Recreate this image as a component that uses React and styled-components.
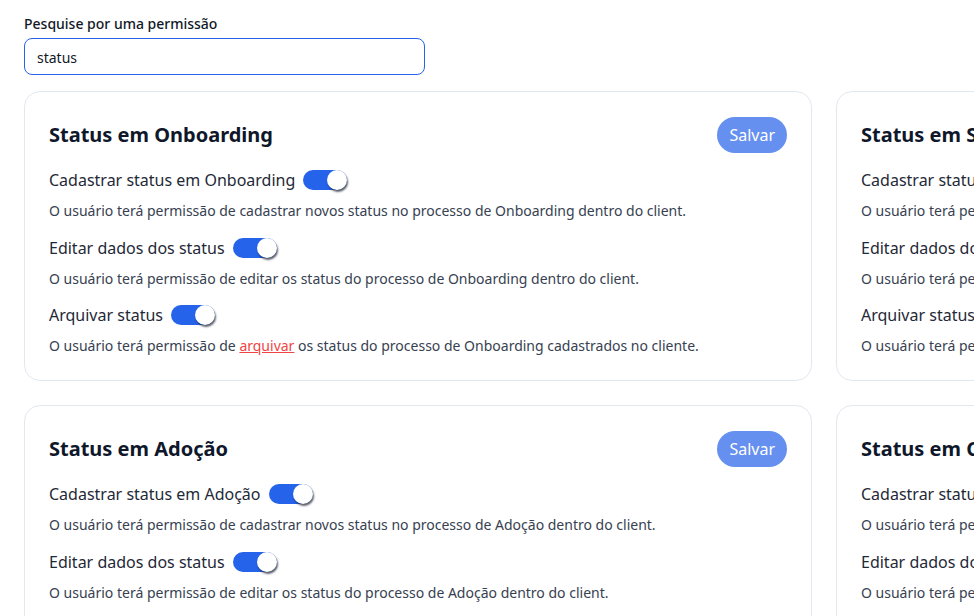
import React, { useState } from 'react';
import styled, { createGlobalStyle } from 'styled-components';

const GlobalStyle = createGlobalStyle`
  html, body {
    margin: 0;
    padding: 0;
    background: #ffffff;
    overflow: hidden;
  }
  body {
    font-family: "Noto Sans", "Open Sans", sans-serif;
    color: #111827;
  }
`

const Page = styled.div`
  padding: 14px 24px 24px;
`

const SearchLabel = styled.label`
  display: block;
  font-size: 14px;
  line-height: 20px;
  font-weight: 500;
  color: #111827;
  margin-bottom: 4px;
`

const SearchInput = styled.input`
  box-sizing: border-box;
  width: 401px;
  height: 37px;
  padding: 1px 12px 0;
  border: 1px solid #2563eb;
  border-radius: 8px;
  font-family: inherit;
  font-size: 14px;
  color: #111827;
  outline: none;
`

const Grid = styled.div`
  display: grid;
  grid-template-columns: repeat(2, 788px);
  gap: 24px;
  margin-top: 16px;
`

const Card = styled.section`
  box-sizing: border-box;
  border: 1px solid #e2e8f0;
  border-radius: 16px;
  padding: 25px 24px 24px;
  display: flex;
  flex-direction: column;
  gap: 14.5px;
`

const CardHeader = styled.div`
  display: flex;
  align-items: center;
  justify-content: space-between;
  height: 36px;
  margin-bottom: 0.5px;
`

const CardTitle = styled.h2`
  margin: 0;
  font-size: 20px;
  line-height: 28px;
  font-weight: 700;
  color: #0f172a;
  white-space: nowrap;
`

const SaveButton = styled.button`
  height: 36px;
  padding: 0 12px;
  border: none;
  border-radius: 999px;
  background: #6590ef;
  color: #ffffff;
  font-family: inherit;
  font-size: 16px;
  cursor: pointer;
`

const Permission = styled.div`
  display: flex;
  flex-direction: column;
  gap: 9px;
`

const PermissionRow = styled.div`
  display: flex;
  align-items: center;
  gap: 8px;
  height: 24px;
`

const PermissionName = styled.span`
  font-size: 16px;
  line-height: 24px;
  color: #1f2937;
  white-space: nowrap;
`

const Description = styled.p`
  margin: 0;
  font-size: 14px;
  line-height: 20px;
  color: #374151;
  white-space: nowrap;
`

const Highlight = styled.span`
  color: #ef4444;
  text-decoration: underline;
`

const Track = styled.button`
  position: relative;
  flex: none;
  width: 44px;
  height: 20px;
  padding: 0;
  border: none;
  border-radius: 999px;
  background: ${props => (props.$on ? '#2563eb' : '#cbd5e1')};
  cursor: pointer;
`

const Knob = styled.span`
  position: absolute;
  top: 0;
  left: ${props => (props.$on ? '24px' : '0')};
  width: 20px;
  height: 20px;
  border-radius: 50%;
  background: #ffffff;
  box-shadow: 1px 2px 2px rgba(15, 23, 42, 0.7);
`

function Toggle({ initial }) {
  const [on, setOn] = useState(initial)
  return (
    <Track $on={on} onClick={() => setOn(!on)} aria-pressed={on}>
      <Knob $on={on} />
    </Track>
  )
}

const makeItems = stage => [
  {
    name: `Cadastrar status em ${stage}`,
    desc: <>O usuário terá permissão de cadastrar novos status no processo de {stage} dentro do client.</>,
  },
  {
    name: 'Editar dados dos status',
    desc: <>O usuário terá permissão de editar os status do processo de {stage} dentro do client.</>,
  },
  {
    name: 'Arquivar status',
    desc: (
      <>
        O usuário terá permissão de <Highlight>arquivar</Highlight> os status do processo de {stage} cadastrados no cliente.
      </>
    ),
  },
]

const stages = ['Onboarding', 'Seleção', 'Adoção', 'Contratação']

function PermissionCard({ stage }) {
  const items = makeItems(stage)
  return (
    <Card>
      <CardHeader>
        <CardTitle>Status em {stage}</CardTitle>
        <SaveButton>Salvar</SaveButton>
      </CardHeader>
      {items.map(item => (
        <Permission key={item.name}>
          <PermissionRow>
            <PermissionName>{item.name}</PermissionName>
            <Toggle initial />
          </PermissionRow>
          <Description>{item.desc}</Description>
        </Permission>
      ))}
    </Card>
  )
}

export default function App() {
  const [query, setQuery] = useState('status')
  return (
    <Page>
      <GlobalStyle />
      <SearchLabel htmlFor="search">Pesquise por uma permissão</SearchLabel>
      <SearchInput id="search" value={query} onChange={e => setQuery(e.target.value)} />
      <Grid>
        {stages.map(stage => (
          <PermissionCard key={stage} stage={stage} />
        ))}
      </Grid>
    </Page>
  )
}
